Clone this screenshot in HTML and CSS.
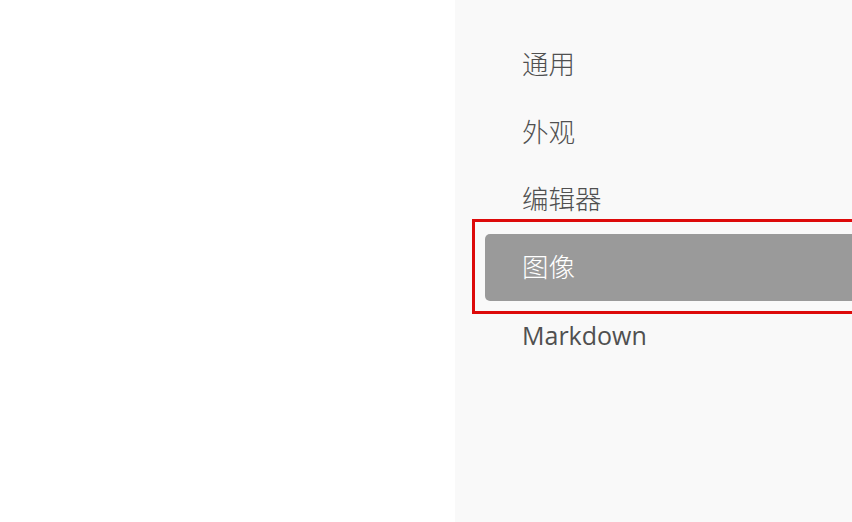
FILE: index.html
```html
<!DOCTYPE html>
<html lang="zh-CN">
<head>
<meta charset="utf-8">
<title>设置</title>
<link rel="stylesheet" href="styles.css">
</head>
<body>
<div class="page">
  <div class="blank"></div>
  <aside class="panel">
    <nav class="nav">
      <div class="item cjk">通用</div>
      <div class="item cjk">外观</div>
      <div class="item cjk">编辑器</div>
      <div class="item cjk active">图像</div>
      <div class="item">Markdown</div>
    </nav>
  </aside>
</div>
</body>
</html>
```
FILE: styles.css
```css
html, body {
  margin: 0;
  padding: 0;
  background: #ffffff;
  overflow: hidden;
}
.page {
  display: flex;
  width: 852px;
  height: 522px;
  font-family: "Open Sans", "Noto Sans CJK SC", sans-serif;
}
.blank {
  width: 455px;
  flex: none;
  background: #ffffff;
}
.panel {
  flex: 1;
  background: #f9f9f9;
  padding-top: 31px;
  overflow: hidden;
}
.nav {
  display: flex;
  flex-direction: column;
  padding-left: 30px;
  margin-right: -20px;
}
.item {
  position: relative;
  box-sizing: border-box;
  height: 67.5px;
  display: flex;
  align-items: center;
  padding-left: 37px;
  font-size: 25px;
  color: #505050;
  border-radius: 5px;
}
.item.cjk {
  font-family: "Noto Sans CJK SC", sans-serif;
  font-size: 26.5px;
  font-weight: 300;
  padding-bottom: 4px;
}
.item.active {
  background: #9a9a9a;
  color: #ffffff;
}
.item.active::before {
  content: "";
  position: absolute;
  left: -13px;
  right: -13px;
  top: -15px;
  bottom: -13px;
  border: 3px solid #dd0a0a;
}
```
